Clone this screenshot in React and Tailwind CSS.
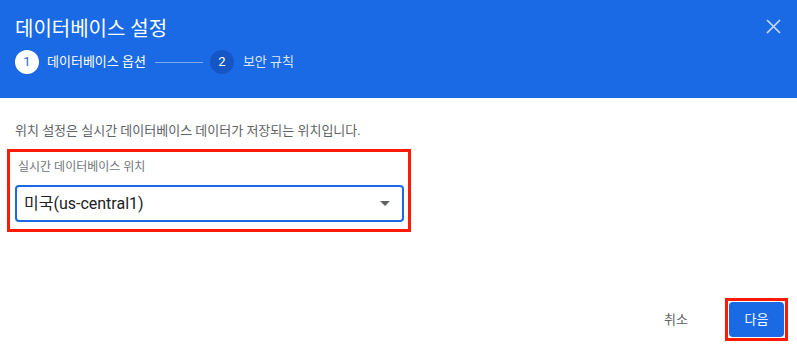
import React from 'react';

export default function App() {
  return (
    <div className="w-[797px] h-[355px] bg-white flex flex-col" style={{ fontFamily: 'Roboto, "Noto Sans CJK KR", sans-serif' }}>
      {/* Header */}
      <div className="h-[98px] bg-[#1a6ae6] flex flex-col px-[15px] relative">
        <h1 className="text-white text-[20px] leading-none mt-[19px]">데이터베이스 설정</h1>
        <div className="flex items-center mt-[11px]">
          <div className="w-6 h-6 rounded-full bg-white text-[#1a6ae6] text-[13px] flex items-center justify-center">1</div>
          <span className="text-white text-[13px] ml-[8px]">데이터베이스 옵션</span>
          <div className="w-[48px] h-px bg-[#7ea9f0] ml-[9px] mr-[7px]" />
          <div className="w-6 h-6 rounded-full bg-[#1656c4] text-white text-[13px] flex items-center justify-center">2</div>
          <span className="text-[#dbe6fb] text-[13px] ml-[9px]">보안 규칙</span>
        </div>
        <button className="absolute right-[16px] top-[19px] text-[#c9dafb]">
          <svg width="15" height="15" viewBox="0 0 15 15" fill="none" stroke="currentColor" strokeWidth="1.7">
            <path d="M1 1L14 14M14 1L1 14" />
          </svg>
        </button>
      </div>

      {/* Body */}
      <div className="flex-1 flex flex-col px-[7px] pt-[26px]">
        <p className="text-[#5f6368] text-[13px] leading-none pl-[8px]">위치 설정은 실시간 데이터베이스 데이터가 저장되는 위치입니다.</p>
        <div className="mt-[12px] w-[404px] h-[83px] border-[3px] border-[#ff1a00] pl-[5px] pt-[9px]">
          <div className="text-[#70757a] text-[12px] leading-none pl-[3px]">실시간 데이터베이스 위치</div>
          <div className="mt-[12px] w-[389px] h-[37px] border-2 border-[#1a6ae6] rounded-[4px] flex items-center justify-between pl-[7px] pr-[12px]">
            <span className="text-[#202124] text-[16px]">미국(us-central1)</span>
            <svg width="10" height="5" viewBox="0 0 10 5"><path d="M0 0L10 0L5 5Z" fill="#5f6368" /></svg>
          </div>
        </div>
        <div className="flex-1" />
        <div className="flex items-center justify-end gap-[37px] pb-[14px] pr-[2px]">
          <button className="text-[#5f6368] text-[13px]">취소</button>
          <div className="border-[3px] border-[#ff1a00] p-px">
            <button className="w-[55px] h-[35px] rounded-[4px] bg-[#1a6ae6] text-white text-[13px]">다음</button>
          </div>
        </div>
      </div>
    </div>
  );
}
